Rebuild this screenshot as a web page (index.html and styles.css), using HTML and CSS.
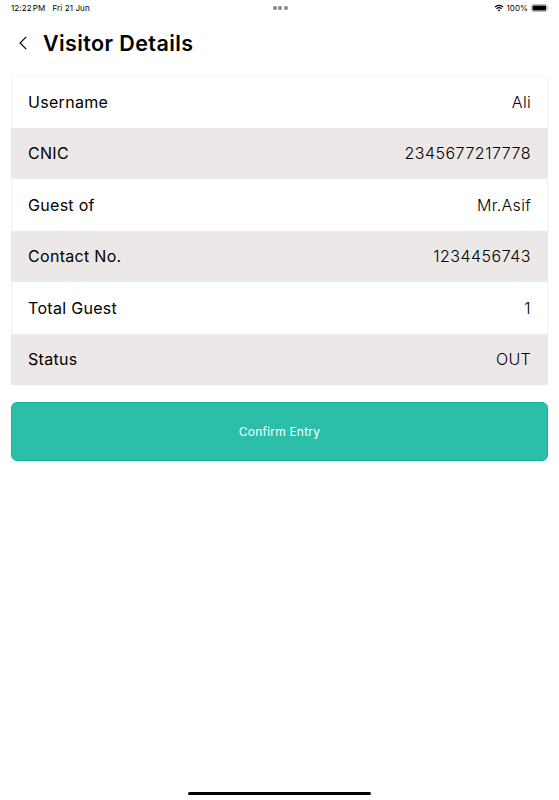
FILE: index.html
```html
<!DOCTYPE html>
<html lang="en">
<head>
  <meta charset="UTF-8">
  <meta name="viewport" content="width=device-width, initial-scale=1.0">
  <title>Visitor Details</title>
  <link rel="stylesheet" href="styles.css">
</head>
<body>
  <!-- Status bar -->
  <div class="status-bar">
    <div class="status-left">
      <span class="time">12:22<span class="ampm">PM</span></span>
      <span class="date">Fri 21 Jun</span>
    </div>
    <div class="dots"><i></i><i></i><i></i></div>
    <div class="status-right">
      <svg class="wifi" width="10" height="8" viewBox="0 0 10 8" fill="none" stroke="#000" stroke-width="1.1">
        <path d="M0.9 3.1C3.2 0.8 6.8 0.8 9.1 3.1"/>
        <path d="M2.4 4.8C3.9 3.5 6.1 3.5 7.6 4.8"/>
        <path d="M3.7 6.1L5 7.4L6.3 6.1C5.6 5.4 4.4 5.4 3.7 6.1Z" fill="#000" stroke="none"/>
      </svg>
      <span class="percent">100%</span>
      <svg class="battery" width="18" height="8" viewBox="0 0 18 8">
        <rect x="0.5" y="0.5" width="15.6" height="7" rx="2" fill="#fff" stroke="#a6a6a6" stroke-width="0.8"/>
        <rect x="1.5" y="1.5" width="13.6" height="5" rx="1" fill="#000"/>
        <path d="M16.9 2.8V5.2C17.8 4.8 17.8 3.2 16.9 2.8Z" fill="#a6a6a6"/>
      </svg>
    </div>
  </div>

  <!-- Header -->
  <div class="header">
    <a href="#" class="back" aria-label="Back">
      <svg width="8" height="14" viewBox="0 0 8 14" fill="none" stroke="#000" stroke-width="1.2">
        <path d="M7.2 0.9L1.1 7L7.2 13.1"/>
      </svg>
    </a>
    <h1>Visitor Details</h1>
  </div>

  <div class="container">
    <div class="details">
      <div class="row"><span class="label">Username</span><span class="value">Ali</span></div>
      <div class="row"><span class="label">CNIC</span><span class="value number">2345677217778</span></div>
      <div class="row"><span class="label">Guest of</span><span class="value">Mr.Asif</span></div>
      <div class="row"><span class="label">Contact No.</span><span class="value number">1234456743</span></div>
      <div class="row"><span class="label">Total Guest</span><span class="value number">1</span></div>
      <div class="row"><span class="label">Status</span><span class="value">OUT</span></div>
    </div>
    <button type="button" class="confirm">Confirm Entry</button>
  </div>

  <div class="home-indicator"></div>
</body>
</html>
```

FILE: styles.css
```css
* {
  box-sizing: border-box;
}

body {
  font-family: Inter, Roboto, sans-serif;
  margin: 0;
  height: 800px;
  background: #fff;
  color: #000;
  display: flex;
  flex-direction: column;
  overflow: hidden;
}

.status-bar {
  display: grid;
  grid-template-columns: 1fr auto 1fr;
  align-items: center;
  height: 16px;
  padding: 0 10px 0 11px;
  font-size: 8px;
  line-height: 16px;
}

.status-left {
  display: flex;
  gap: 6.5px;
}

.time {
  width: 35px;
  white-space: nowrap;
  letter-spacing: 0.1px;
}

.ampm {
  margin-left: 1px;
}

.date {
  letter-spacing: 0.1px;
}

.dots {
  display: flex;
  gap: 1.5px;
}

.dots i {
  width: 4px;
  height: 4px;
  border-radius: 50%;
  background: #858585;
}

.status-right {
  display: flex;
  justify-content: flex-end;
  align-items: center;
}

.percent {
  margin: 0 3px 0 2px;
  letter-spacing: 0.1px;
}

.header {
  display: flex;
  align-items: center;
  height: 54px;
  padding-left: 19px;
}

.back {
  display: flex;
  width: 24px;
}

h1 {
  margin: 0;
  font-size: 21.5px;
  font-weight: 600;
  line-height: 28px;
  letter-spacing: 0.4px;
}

.container {
  padding: 5.5px 11px 0;
}

.details {
  padding-top: 1px;
  box-shadow: inset 0 0 0 1px #f4f3f3;
}

.row {
  display: flex;
  justify-content: space-between;
  align-items: center;
  height: 51.45px;
  padding: 0 17px 0.5px;
  font-size: 16px;
}

.row:nth-child(even) {
  background: #ece8e7;
}

.label {
  letter-spacing: 0.3px;
}

.value {
  font-weight: 300;
  letter-spacing: 0.3px;
}

.number {
  letter-spacing: 0.5px;
}

.confirm {
  display: block;
  width: 100%;
  height: 59px;
  margin-top: 17px;
  border: 1px solid #12b59c;
  border-radius: 6px;
  background: #2bbfaa;
  color: #fff;
  font-family: inherit;
  font-size: 12px;
  font-weight: 400;
  letter-spacing: 0.2px;
}

.home-indicator {
  width: 183px;
  height: 3.5px;
  margin: auto auto 5px;
  border-radius: 2px;
  background: #000;
}
```
